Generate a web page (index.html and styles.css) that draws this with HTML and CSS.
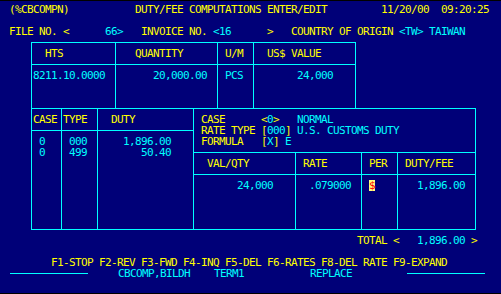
FILE: index.html
```html
<!DOCTYPE html>
<html lang="en">
<head>
    <meta charset="UTF-8">
    <title>Duty/Fee Computations Enter/Edit</title>
    <link rel="stylesheet" href="styles.css">
</head>
<body>

<div class="screen">
    <div class="line">(%CBCOMPN)           DUTY/FEE COMPUTATIONS ENTER/EDIT         11/20/00  09:20:25</div>
    <div class="line"></div>
    <div class="line">FILE NO. &lt;<span class="val">      66&gt;</span>   INVOICE NO. <span class="val">&lt;16</span>      &gt;   COUNTRY OF ORIGIN <span class="val">&lt;TW&gt; TAIWAN</span></div>

    <!-- tariff line -->
    <div class="hts">
        <div class="cell pad-13">HTS</div>
        <div class="cell pad-19">QUANTITY</div>
        <div class="cell pad-7">U/M</div>
        <div class="cell pad-13">US$ VALUE</div>
        <div class="cell val pad-1">8211.10.0000</div>
        <div class="cell val num pad-r10">20,000.00</div>
        <div class="cell val pad-7">PCS</div>
        <div class="cell val num pad-r22">24,000</div>
    </div>

    <!-- duty cases + rate detail -->
    <div class="duty">
        <div class="cell pad-1">CASE</div>
        <div class="cell pad-1">TYPE</div>
        <div class="cell pad-13">DUTY</div>

        <div class="rate">
            <div class="cell info pad-7">
                <div>CASE      &lt;<span class="val">0</span>&gt;   <span class="val">NORMAL</span></div>
                <div>RATE TYPE [<span class="val">000</span>] <span class="val">U.S. CUSTOMS DUTY</span></div>
                <div>FORMULA   [<span class="val">X</span>] <span class="val">E</span></div>
            </div>
            <div class="cell pad-13">VAL/QTY</div>
            <div class="cell pad-7">RATE</div>
            <div class="cell pad-7">PER</div>
            <div class="cell pad-7">DUTY/FEE</div>
            <div class="cell val num pad-r22">24,000</div>
            <div class="cell val num pad-r10">.079000</div>
            <div class="cell pad-7"><span class="cursor">$</span></div>
            <div class="cell val num pad-r10">1,896.00</div>
        </div>

        <div class="cell val pad-7">
            <div>0</div>
            <div>0</div>
        </div>
        <div class="cell val pad-7">
            <div>000</div>
            <div>499</div>
        </div>
        <div class="cell val num pad-r22">
            <div>1,896.00</div>
            <div>50.40</div>
        </div>
    </div>

    <div class="line total">                                                          TOTAL &lt;   <span class="val">1,896.00</span> &gt;</div>
    <div class="line"></div>
    <div class="line">       F1-STOP F2-REV F3-FWD F4-INQ F5-DEL F6-RATES F8-DEL RATE F9-EXPAND</div>
    <div class="line val"><span class="rule"></span>     CBCOMP,BILDH    TERM1           REPLACE         <span class="rule"></span></div>
</div>

</body>
</html>
```

FILE: styles.css
```css
html, body {
    margin: 0;
    background-color: #000078;
}
body {
    height: 294px;
    box-sizing: border-box;
    padding: 3px 0 0 9px;
    border-top: 1px solid #000;
    border-bottom: 1px solid #000;
    overflow: hidden;
}
.screen {
    font-family: "DejaVu Sans Mono", "Liberation Mono", monospace;
    font-size: 11px;
    letter-spacing: -0.6226px;
    line-height: 11px;
    color: #ffff00;
    white-space: nowrap;
}
.line {
    height: 11px;
    white-space: pre;
}
.info div {
    white-space: pre;
}
.val {
    color: #00ffff;
}

/* boxes: cyan background shows through the 1px gaps as ruling lines */
.hts, .duty, .rate {
    display: grid;
    gap: 1px;
    background-color: #00ffff;
}
.hts {
    width: max-content;
    margin: 5px 0 0 22px;
    padding: 1px;
    grid-template-columns: 83px 101px 35px 101px;
    grid-template-rows: 21px 43px;
}
.duty {
    width: max-content;
    margin: -1px 0 0 22px;
    padding: 1px;
    grid-template-columns: 29px 35px 95px 281px;
    grid-template-rows: 21px 98px;
}
.rate {
    grid-column: 4;
    grid-row: 1 / 3;
    grid-template-columns: 101px 65px 35px 77px;
    grid-template-rows: 43px 21px 54px;
}
.cell {
    background-color: #000078;
    padding-top: 5px;
}
.info {
    grid-column: 1 / -1;
}
.num {
    text-align: right;
}
.pad-1 { padding-left: 1px; }
.pad-7 { padding-left: 7px; }
.pad-13 { padding-left: 13px; }
.pad-19 { padding-left: 19px; }
.pad-r10 { padding-right: 10px; }
.pad-r22 { padding-right: 22px; }

.cursor {
    display: inline-block;
    width: 6px;
    background-color: #ffff80;
    color: #ff0000;
}
.total {
    margin-top: 5px;
}
.rule {
    display: inline-block;
    width: 78px;
    height: 1px;
    margin-left: 1px;
    vertical-align: 3px;
    background-color: #00ffff;
}
```
